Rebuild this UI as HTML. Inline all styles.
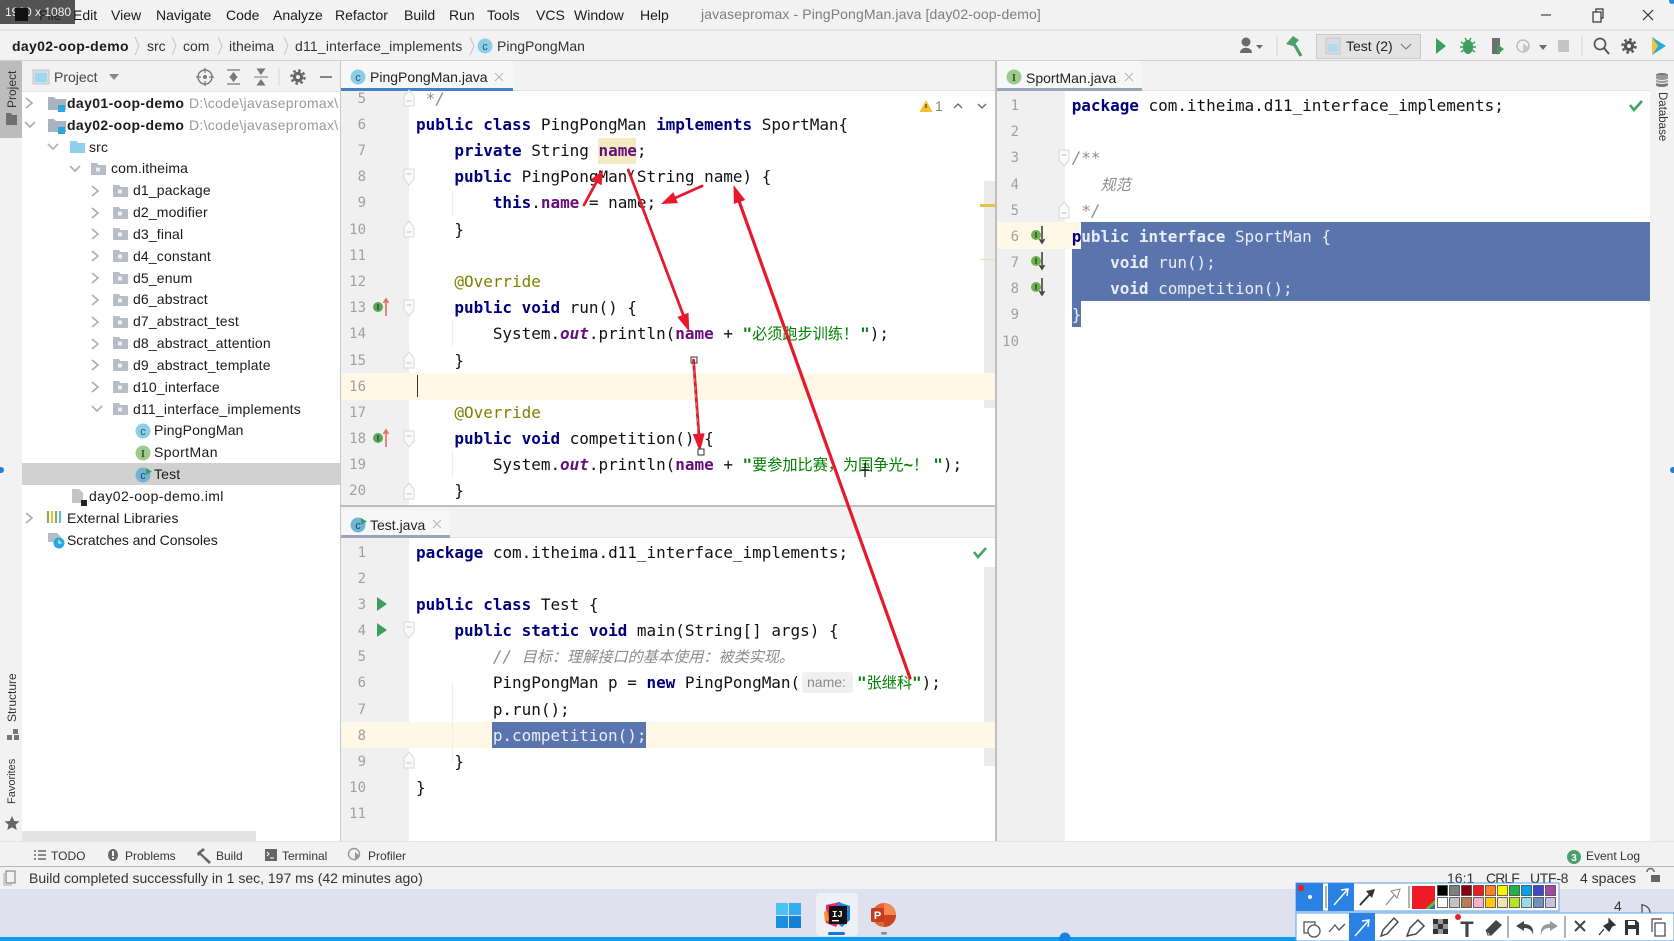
<!DOCTYPE html>
<html><head><meta charset="utf-8"><title>PingPongMan.java</title>
<style>
html,body{margin:0;padding:0;width:1674px;height:941px;overflow:hidden;background:#fff}
#root{position:relative;width:1674px;height:941px;overflow:hidden;font-family:"Liberation Sans","Noto Sans CJK SC",sans-serif;font-size:14px;color:#1a1a1a;filter:blur(.3px)}
.b{position:absolute}
.t{position:absolute;white-space:pre;height:22px;line-height:22px}
.r{position:absolute;white-space:pre;height:22px;line-height:22px;top:calc(var(--i)*21.83px + 91.9px);letter-spacing:.15px}
.pane{position:absolute;left:0;width:1674px;height:0}
.c,.n{position:absolute;top:calc(var(--n)*26.17px);height:26px;line-height:26px;white-space:pre}
.c{font-family:"DejaVu Sans Mono","Noto Sans CJK SC",monospace;font-size:16px;letter-spacing:-.03px;color:#111}
.n{font-family:"DejaVu Sans Mono",monospace;font-size:14px;color:#a0a0a0;text-align:right;width:30px}
.k{color:#000080;font-weight:bold}
.f{color:#660e7a;font-weight:bold}
.s{color:#008000;font-weight:bold}
.a{color:#808000}
.m{color:#8c8c8c;font-style:italic}
.o{color:#660e7a;font-style:italic;font-weight:bold}
.z{font-family:"Noto Sans CJK SC",sans-serif;font-size:15.15px;letter-spacing:0;line-height:0;font-weight:normal}
.w,.w .k{color:#e9edf5}
.w .k{font-weight:bold}
.tb{font-size:12px}
.rot{position:absolute;white-space:pre;font-size:12px;line-height:14px;color:#333;transform-origin:0 0}
</style></head><body><div id="root">

<!-- title + nav backgrounds -->
<div class="b" style="left:0;top:0;width:1674px;height:61px;background:#f2f2f2"></div>
<div class="b" style="left:0;top:29px;width:1674px;height:2px;background:#e4e4e4"></div>
<div class="b" style="left:0;top:60px;width:1674px;height:1px;background:#cfcfcf"></div>

<span class="t" style="left:39px;top:4px">File</span>
<span class="t" style="left:73px;top:4px">Edit</span>
<span class="t" style="left:111px;top:4px">View</span>
<span class="t" style="left:156px;top:4px">Navigate</span>
<span class="t" style="left:226px;top:4px">Code</span>
<span class="t" style="left:273px;top:4px">Analyze</span>
<span class="t" style="left:335px;top:4px">Refactor</span>
<span class="t" style="left:404px;top:4px">Build</span>
<span class="t" style="left:449px;top:4px">Run</span>
<span class="t" style="left:487px;top:4px">Tools</span>
<span class="t" style="left:536px;top:4px">VCS</span>
<span class="t" style="left:574px;top:4px">Window</span>
<span class="t" style="left:640px;top:4px">Help</span>
<span class="t" style="left:701px;top:3px;color:#7d7d7d;letter-spacing:.11px">javasepromax - PingPongMan.java [day02-oop-demo]</span>

<div class="b" style="left:0;top:0;width:75px;height:24px;background:rgba(38,38,38,.78)"></div>
<span class="t" style="left:5px;top:1px;color:#eee;font-size:12px">1920 x 1080</span>

<!-- breadcrumb -->
<span class="t" style="left:12px;top:35px;font-weight:bold;letter-spacing:.35px">day02-oop-demo</span>
<span class="t" style="left:147px;top:35px;color:#333">src</span>
<span class="t" style="left:183px;top:35px;color:#333">com</span>
<span class="t" style="left:229px;top:35px;color:#333">itheima</span>
<span class="t" style="left:295px;top:35px;color:#333;letter-spacing:.18px">d11_interface_implements</span>
<span class="t" style="left:497px;top:35px;color:#333">PingPongMan</span>

<!-- run config -->
<div class="b" style="left:1316px;top:34px;width:103px;height:23px;background:#e3e3e3;border:1px solid #c9c9c9"></div>
<span class="t" style="left:1346px;top:35px;color:#222">Test (2)</span>

<!-- left stripe -->
<div class="b" style="left:0;top:61px;width:22px;height:780px;background:#f2f2f2"></div>
<div class="b" style="left:0;top:61px;width:22px;height:77px;background:#bcbcbc"></div>
<span class="rot" style="left:5px;top:108px;transform:rotate(-90deg);width:50px">Project</span>
<span class="rot" style="left:5px;top:722px;transform:rotate(-90deg);width:60px">Structure</span>
<span class="rot" style="left:5px;top:804px;transform:rotate(-90deg);width:60px;font-size:11px">Favorites</span>

<!-- project panel -->
<div class="b" style="left:22px;top:61px;width:318px;height:30px;background:#f2f2f2"></div>
<div class="b" style="left:22px;top:91px;width:318px;height:1px;background:#e6e6e6"></div>
<span class="t" style="left:54px;top:66px;color:#444">Project</span>
<div class="b" style="left:22px;top:463px;width:318px;height:22px;background:#d1d1d1"></div>
<div class="b" style="left:22px;top:831px;width:234px;height:10px;background:#e3e3e3"></div>

<div class="r" style="--i:0;left:67px;letter-spacing:.38px"><b>day01-oop-demo</b></div>
<div class="r" style="--i:1;left:67px;letter-spacing:.38px"><b>day02-oop-demo</b></div>
<div class="r" style="--i:0;left:189px;color:#9a9a9a;letter-spacing:.3px">D:\code\javasepromax\</div>
<div class="r" style="--i:1;left:189px;color:#9a9a9a;letter-spacing:.3px">D:\code\javasepromax\</div>
<div class="r" style="--i:2;left:89px">src</div>
<div class="r" style="--i:3;left:111px">com.itheima</div>
<div class="r" style="--i:4;left:133px">d1_package</div>
<div class="r" style="--i:5;left:133px">d2_modifier</div>
<div class="r" style="--i:6;left:133px">d3_final</div>
<div class="r" style="--i:7;left:133px">d4_constant</div>
<div class="r" style="--i:8;left:133px">d5_enum</div>
<div class="r" style="--i:9;left:133px">d6_abstract</div>
<div class="r" style="--i:10;left:133px">d7_abstract_test</div>
<div class="r" style="--i:11;left:133px">d8_abstract_attention</div>
<div class="r" style="--i:12;left:133px">d9_abstract_template</div>
<div class="r" style="--i:13;left:133px">d10_interface</div>
<div class="r" style="--i:14;left:133px;letter-spacing:.2px">d11_interface_implements</div>
<div class="r" style="--i:15;left:154px">PingPongMan</div>
<div class="r" style="--i:16;left:154px;letter-spacing:.4px">SportMan</div>
<div class="r" style="--i:17;left:154px">Test</div>
<div class="r" style="--i:18;left:89px;letter-spacing:.4px">day02-oop-demo.iml</div>
<div class="r" style="--i:19;left:67px">External Libraries</div>
<div class="r" style="--i:20;left:67px;letter-spacing:-.05px">Scratches and Consoles</div>
<div class="b" style="left:340px;top:61px;width:1px;height:780px;background:#c9c9c9"></div>

<!-- TOP EDITOR -->
<div class="b" style="left:341px;top:91px;width:654px;height:415px;background:#fff"></div>
<div class="b" style="left:341px;top:91px;width:68px;height:415px;background:#f0f0f0"></div>
<div class="b" style="left:984px;top:181px;width:11px;height:227px;background:#ebebeb"></div>
<div class="b" style="left:341px;top:373px;width:654px;height:26.5px;background:#fff8e6"></div>
<div class="b" style="left:598px;top:138px;width:38px;height:26px;background:#f5ebc3"></div>
<div class="b" style="left:980px;top:204px;width:15px;height:3px;background:#e3c34a"></div>
<div class="b" style="left:980px;top:259px;width:15px;height:1px;background:#f0dfa0"></div>
<div class="b" style="left:452px;top:190px;width:1px;height:26px;background:#efefef"></div>
<div class="b" style="left:452px;top:320px;width:1px;height:26px;background:#efefef"></div>
<div class="b" style="left:452px;top:451px;width:1px;height:26px;background:#efefef"></div>
<div class="b" style="left:417px;top:375px;width:1px;height:22px;background:#333"></div>

<div class="pane" style="top:-45.05px">
<span class="n" style="--n:5;left:336px">5</span><span class="n" style="--n:6;left:336px">6</span><span class="n" style="--n:7;left:336px">7</span><span class="n" style="--n:8;left:336px">8</span><span class="n" style="--n:9;left:336px">9</span><span class="n" style="--n:10;left:336px">10</span><span class="n" style="--n:11;left:336px">11</span><span class="n" style="--n:12;left:336px">12</span><span class="n" style="--n:13;left:336px">13</span><span class="n" style="--n:14;left:336px">14</span><span class="n" style="--n:15;left:336px">15</span><span class="n" style="--n:16;left:336px">16</span><span class="n" style="--n:17;left:336px">17</span><span class="n" style="--n:18;left:336px">18</span><span class="n" style="--n:19;left:336px">19</span><span class="n" style="--n:20;left:336px">20</span>
<div class="c" style="--n:5;left:416px"><span class="m"> */</span></div>
<div class="c" style="--n:6;left:416px"><span class="k">public class</span> PingPongMan <span class="k">implements</span> SportMan{</div>
<div class="c" style="--n:7;left:416px">    <span class="k">private</span> String <span class="f">name</span>;</div>
<div class="c" style="--n:8;left:416px">    <span class="k">public</span> PingPongMan(String name) {</div>
<div class="c" style="--n:9;left:416px">        <span class="k">this</span>.<span class="f">name</span> = name;</div>
<div class="c" style="--n:10;left:416px">    }</div>
<div class="c" style="--n:12;left:416px">    <span class="a">@Override</span></div>
<div class="c" style="--n:13;left:416px">    <span class="k">public void</span> run() {</div>
<div class="c" style="--n:14;left:416px">        System.<span class="o">out</span>.println(<span class="f">name</span> + <span class="s">"<span class="z">必须跑步训练</span><span class="z" style="padding-right:2px">！</span>"</span>);</div>
<div class="c" style="--n:15;left:416px">    }</div>
<div class="c" style="--n:17;left:416px">    <span class="a">@Override</span></div>
<div class="c" style="--n:18;left:416px">    <span class="k">public void</span> competition() {</div>
<div class="c" style="--n:19;left:416px">        System.<span class="o">out</span>.println(<span class="f">name</span> + <span class="s">"<span class="z">要参加比赛，为国争光</span>~<span class="z" style="padding-right:5px">！</span>"</span>);</div>
<div class="c" style="--n:20;left:416px">    }</div>
</div>

<!-- top tab strip -->
<div class="b" style="left:341px;top:61px;width:655px;height:30px;background:#f2f2f2"></div>
<div class="b" style="left:341px;top:61px;width:172px;height:27px;background:#f7f7f7"></div>
<div class="b" style="left:341px;top:88px;width:172px;height:3px;background:#4083c9"></div>
<div class="b" style="left:513px;top:90px;width:483px;height:1px;background:#e4e4e4"></div>
<span class="t" style="left:370px;top:66px;color:#222;font-size:14px">PingPongMan.java</span>

<div class="b" style="left:340px;top:505px;width:656px;height:2px;background:#bfbfbf"></div>

<!-- BOTTOM EDITOR -->
<div class="b" style="left:341px;top:507px;width:655px;height:31px;background:#f2f2f2"></div>
<div class="b" style="left:341px;top:510px;width:109px;height:25px;background:#f7f7f7"></div>
<div class="b" style="left:341px;top:535px;width:109px;height:3px;background:#9aa5bd"></div>
<div class="b" style="left:450px;top:537px;width:546px;height:1px;background:#e4e4e4"></div>
<span class="t" style="left:370px;top:514px;color:#222;font-size:14px">Test.java</span>
<div class="b" style="left:341px;top:538px;width:68px;height:303px;background:#f0f0f0"></div>
<div class="b" style="left:984px;top:567px;width:11px;height:199px;background:#ebebeb"></div>
<div class="b" style="left:341px;top:722px;width:654px;height:26px;background:#fff8e6"></div>
<div class="b" style="left:452px;top:682px;width:1px;height:80px;background:#efefef"></div>
<div class="b" style="left:492px;top:722px;width:154px;height:26px;background:#5a75ad"></div>
<div class="b" style="left:802px;top:672px;width:51px;height:21px;background:#f0f0f0;border-radius:3px"></div>
<span class="t" style="left:807px;top:671px;color:#8a8a8a;font-size:14px">name:</span>

<div class="pane" style="top:513.4px">
<span class="n" style="--n:1;left:336px">1</span><span class="n" style="--n:2;left:336px">2</span><span class="n" style="--n:3;left:336px">3</span><span class="n" style="--n:4;left:336px">4</span><span class="n" style="--n:5;left:336px">5</span><span class="n" style="--n:6;left:336px">6</span><span class="n" style="--n:7;left:336px">7</span><span class="n" style="--n:8;left:336px">8</span><span class="n" style="--n:9;left:336px">9</span><span class="n" style="--n:10;left:336px">10</span><span class="n" style="--n:11;left:336px">11</span>
<div class="c" style="--n:1;left:416px"><span class="k">package</span> com.itheima.d11_interface_implements;</div>
<div class="c" style="--n:3;left:416px"><span class="k">public class</span> Test {</div>
<div class="c" style="--n:4;left:416px">    <span class="k">public static void</span> main(String[] args) {</div>
<div class="c" style="--n:5;left:416px">        <span class="m">// <span class="z">目标：理解接口的基本使用：被类实现。</span></span></div>
<div class="c" style="--n:6;left:416px">        PingPongMan p = <span class="k">new</span> PingPongMan(</div>
<div class="c" style="--n:6;left:857px"><span class="s">"<span class="z">张继科</span>"</span>);</div>
<div class="c" style="--n:7;left:416px">        p.run();</div>
<div class="c w" style="--n:8;left:416px">        p.competition();</div>
<div class="c" style="--n:9;left:416px">    }</div>
<div class="c" style="--n:10;left:416px">}</div>
</div>

<!-- RIGHT EDITOR -->
<div class="b" style="left:995px;top:61px;width:2px;height:780px;background:#bfbfbf"></div>
<div class="b" style="left:997px;top:61px;width:653px;height:30px;background:#f2f2f2"></div>
<div class="b" style="left:997px;top:61px;width:145px;height:27px;background:#f7f7f7"></div>
<div class="b" style="left:997px;top:88px;width:145px;height:3px;background:#9aa5bd"></div>
<div class="b" style="left:1142px;top:90px;width:508px;height:1px;background:#e4e4e4"></div>
<span class="t" style="left:1026px;top:67px;color:#222;font-size:14px">SportMan.java</span>
<div class="b" style="left:997px;top:91px;width:68px;height:750px;background:#f0f0f0"></div>
<div class="b" style="left:997px;top:222px;width:84px;height:26.5px;background:#fff8e6"></div>
<div class="b" style="left:1081px;top:222px;width:569px;height:26.5px;background:#5a75ad"></div>
<div class="b" style="left:1072px;top:248.5px;width:578px;height:52.5px;background:#5a75ad"></div>
<div class="b" style="left:1072px;top:301px;width:9px;height:26px;background:#5a75ad"></div>

<div class="pane" style="top:66.9px">
<span class="n" style="--n:1;left:989px">1</span><span class="n" style="--n:2;left:989px">2</span><span class="n" style="--n:3;left:989px">3</span><span class="n" style="--n:4;left:989px">4</span><span class="n" style="--n:5;left:989px">5</span><span class="n" style="--n:6;left:989px">6</span><span class="n" style="--n:7;left:989px">7</span><span class="n" style="--n:8;left:989px">8</span><span class="n" style="--n:9;left:989px">9</span><span class="n" style="--n:10;left:989px">10</span>
<div class="c" style="--n:1;left:1071.7px"><span class="k">package</span> com.itheima.d11_interface_implements;</div>
<div class="c" style="--n:3;left:1071.7px"><span class="m">/**</span></div>
<div class="c" style="--n:4;left:1071.7px"><span class="m">   <span class="z">规范</span></span></div>
<div class="c" style="--n:5;left:1071.7px"><span class="m"> */</span></div>
<div class="c" style="--n:6;left:1071.7px"><span class="k">p</span><span class="w"><span class="k">ublic interface</span> SportMan {</span></div>
<div class="c w" style="--n:7;left:1071.7px">    <span class="k">void</span> run();</div>
<div class="c w" style="--n:8;left:1071.7px">    <span class="k">void</span> competition();</div>
<div class="c w" style="--n:9;left:1071.7px">}</div>
</div>

<!-- right stripe -->
<div class="b" style="left:1650px;top:61px;width:24px;height:780px;background:#f2f2f2"></div>
<span class="rot" style="left:1669px;top:92px;transform:rotate(90deg);width:60px;font-size:11.5px">Database</span>

<!-- bottom bars -->
<div class="b" style="left:0;top:841px;width:1674px;height:25px;background:#f2f2f2;border-top:1px solid #e4e4e4;box-sizing:border-box"></div>
<div class="b" style="left:0;top:866px;width:1674px;height:1px;background:#b9b9b9"></div>
<div class="b" style="left:0;top:867px;width:1674px;height:22px;background:#f2f2f2"></div>
<span class="t tb" style="left:51px;top:845px;color:#333">TODO</span>
<span class="t tb" style="left:125px;top:845px;color:#333">Problems</span>
<span class="t tb" style="left:216px;top:845px;color:#333">Build</span>
<span class="t tb" style="left:282px;top:845px;color:#333">Terminal</span>
<span class="t tb" style="left:368px;top:845px;color:#333">Profiler</span>
<span class="t tb" style="left:1586px;top:845px;color:#333">Event Log</span>
<span class="t" style="left:29px;top:866.5px;color:#333">Build completed successfully in 1 sec, 197 ms (42 minutes ago)</span>
<span class="t" style="left:1447px;top:866.5px;color:#333">16:1</span>
<span class="t" style="left:1486px;top:866.5px;color:#333;letter-spacing:-.9px">CRLF</span>
<span class="t" style="left:1530px;top:866.5px;color:#333;letter-spacing:-.3px">UTF-8</span>
<span class="t" style="left:1580px;top:866.5px;color:#333">4 spaces</span>

<!-- taskbar -->
<div class="b" style="left:0;top:889px;width:1674px;height:48px;background:#dfe2ee"></div>
<div class="b" style="left:0;top:937px;width:1674px;height:4px;background:#0a9df0"></div>
<div class="b" style="left:816px;top:893px;width:42px;height:43px;background:#eef0f7;border-radius:4px"></div>
<span class="t" style="left:1614px;top:895px;color:#333">4</span>

<!-- SVG icons & annotations -->
<svg class="b" style="left:0;top:0" width="1674" height="941" viewBox="0 0 1674 941" xmlns="http://www.w3.org/2000/svg">
<defs>
<symbol id="fo" viewBox="0 0 15 12" width="15" height="12"><path d="M0 0h6l1.5 2H15v10H0z" fill="#b6bdc6"/><rect x="5" y="4.5" width="4" height="4" fill="#eef0f3"/></symbol>
<symbol id="ro" viewBox="0 0 10 12" width="10" height="12"><path d="M2 1l6 5-6 5" fill="none" stroke="#b0b0b0" stroke-width="1.7"/></symbol>
<symbol id="do" viewBox="0 0 12 10" width="12" height="10"><path d="M1 2l5 5 5-5" fill="none" stroke="#b0b0b0" stroke-width="1.7"/></symbol>
<symbol id="fu" viewBox="0 0 14 20" width="14" height="20"><path d="M2 2h10v10l-5 6-5-6z" fill="#fafafa" stroke="#d8d8d8"/><path d="M4.5 7h5" stroke="#c0c0c0"/></symbol>
<symbol id="fd" viewBox="0 0 14 20" width="14" height="20"><path d="M2 18h10V8L7 2 2 8z" fill="#fafafa" stroke="#d8d8d8"/><path d="M4.5 13h5" stroke="#c0c0c0"/></symbol>
<symbol id="ov" viewBox="0 0 18 22" width="18" height="22"><circle cx="6" cy="11" r="5" fill="#5aa65a"/><rect x="5.2" y="8" width="1.6" height="6" fill="#2d5f2d"/><path d="M14 20V4M11.5 7L14 3l2.5 4" stroke="#e2705c" stroke-width="1.6" fill="none"/></symbol>
<symbol id="im" viewBox="0 0 20 22" width="20" height="22"><circle cx="6" cy="11" r="5" fill="#6fb04f"/><rect x="5.2" y="8" width="1.6" height="6" fill="#2d5f2d"/><path d="M12 2v17M9.5 15l2.5 4 2.5-4" stroke="#444" stroke-width="1.6" fill="none"/></symbol>
</defs>

<!-- JB logo behind overlay -->
<rect x="15" y="8" width="13" height="13" fill="#111"/>

<!-- window controls -->
<path d="M1541 15h10" stroke="#444" stroke-width="1.2"/>
<rect x="1593" y="12" width="8" height="10" fill="none" stroke="#333" stroke-width="1.2"/><path d="M1596 12V9h7v9h-2" fill="none" stroke="#333" stroke-width="1.2"/>
<path d="M1643 10l10 10M1653 10l-10 10" stroke="#333" stroke-width="1.2"/>
<circle cx="1672" cy="1" r="3" fill="#1d8ef0"/>

<!-- breadcrumb chevrons and icon -->
<g fill="none" stroke="#c4c4c4" stroke-width="1"><path d="M135 37l4 9-4 9M172 37l4 9-4 9M218 37l4 9-4 9M284 37l4 9-4 9M470 37l4 9-4 9"/></g>
<circle cx="485" cy="46" r="7.5" fill="#8ccde8"/>
<text x="485" y="50" font-size="11" text-anchor="middle" fill="#2f5266" font-family="Liberation Sans">c</text>

<!-- toolbar right -->
<circle cx="1246" cy="42" r="4.5" fill="#6b6b6b"/><path d="M1240 53c0-7 12-7 12 0z" fill="#6b6b6b"/><path d="M1256 45h7l-3.5 4z" fill="#6b6b6b"/>
<path d="M1277 36v20" stroke="#d4d4d4"/>
<path d="M1286 44l7-8 6 4-6 6z" fill="#4ba06a"/><path d="M1293 42l8 14" stroke="#4ba06a" stroke-width="3.2"/>
<rect x="1326" y="38" width="14" height="16" fill="#d7dde2" stroke="#c3c9cf"/><rect x="1328" y="44" width="10" height="8" fill="#b3d9ec"/>
<path d="M1401 44l5 5 5-5" fill="none" stroke="#777" stroke-width="1.1"/>
<path d="M1436 38l10 8-10 8z" fill="#3d9f5d"/>
<ellipse cx="1468" cy="47" rx="5" ry="7" fill="#3d9f5d"/><path d="M1461 42l3 2M1475 42l-3 2M1460 47h3M1476 47h-3M1461 52l3-2M1475 52l-3-2M1465 38l2 3M1471 38l-2 3" stroke="#3d9f5d" stroke-width="1.5"/>
<path d="M1492 38h8v16h-8z" fill="#6f6f6f"/><path d="M1497 44l7 5-7 6z" fill="#3d9f5d"/>
<circle cx="1523" cy="46" r="6" fill="none" stroke="#bdbdbd" stroke-width="1.5"/><path d="M1523 43l6 5-6 5z" fill="#c9c9c9"/>
<path d="M1539 45h8l-4 5z" fill="#6b6b6b"/>
<rect x="1558" y="40" width="11" height="12" fill="#c5c5c5"/>
<path d="M1582 36v20" stroke="#d4d4d4"/>
<circle cx="1600" cy="44" r="5.5" fill="none" stroke="#555" stroke-width="1.7"/><path d="M1604 48l5 6" stroke="#555" stroke-width="2"/>
<circle cx="1629" cy="46" r="3.6" fill="none" stroke="#555" stroke-width="3.2"/><circle cx="1629" cy="46" r="6.5" fill="none" stroke="#555" stroke-width="2.4" stroke-dasharray="2.55 2.55"/>
<path d="M1652 37l14 9-14 9z" fill="#2aa9dd"/><path d="M1652 37l6 9-6 9z" fill="#f5c63a"/>

<!-- left stripe icons -->
<path d="M5 113h5l1 2h5v10H5z" fill="#6f6f6f" transform="translate(1 0)"/>
<rect x="13" y="729" width="5" height="5" fill="#777"/><rect x="7" y="735" width="5" height="5" fill="#777"/><rect x="14" y="735" width="5" height="5" fill="#777"/>
<path d="M12 816l2.2 5 5.3.4-4 3.4 1.3 5.2-4.8-2.8-4.8 2.8 1.3-5.2-4-3.4 5.3-.4z" fill="#666"/>
<circle cx="1" cy="470" r="3" fill="#1d7fe0"/><circle cx="1673" cy="470" r="3" fill="#1d7fe0"/>

<!-- project header icons -->
<rect x="33" y="70" width="16" height="14" fill="#d7dde2" stroke="#c0c6cc"/><rect x="35" y="73" width="12" height="9" fill="#9fd7ef"/>
<path d="M109 74h10l-5 6z" fill="#888"/>
<circle cx="205" cy="77" r="7" fill="none" stroke="#777" stroke-width="1.4"/><circle cx="205" cy="77" r="2" fill="#777"/><path d="M205 68v5M205 81v5M196 77h5M209 77h5" stroke="#777" stroke-width="1.2"/>
<path d="M227 70h13M227 84h13M233.5 73l-3 4h6zM233.5 81l-3-4h6z" stroke="#777" stroke-width="1.3" fill="#777"/>
<path d="M254 77h14M261 74l-3.5-5h7zM261 80l-3.5 5h7z" stroke="#777" stroke-width="1.1" fill="#777"/>
<path d="M279 68v18" stroke="#d8d8d8"/>
<circle cx="298" cy="77" r="3.6" fill="none" stroke="#666" stroke-width="3.2"/><circle cx="298" cy="77" r="6.5" fill="none" stroke="#666" stroke-width="2.4" stroke-dasharray="2.55 2.55"/>
<path d="M320 77h12" stroke="#777" stroke-width="1.8"/>

<!-- tree chevrons -->
<use href="#ro" x="24" y="97"/><use href="#do" x="24" y="120"/><use href="#do" x="47" y="142"/><use href="#do" x="69" y="164"/>
<use href="#ro" x="90" y="185"/><use href="#ro" x="90" y="207"/><use href="#ro" x="90" y="228"/><use href="#ro" x="90" y="250"/><use href="#ro" x="90" y="272"/><use href="#ro" x="90" y="294"/><use href="#ro" x="90" y="316"/><use href="#ro" x="90" y="338"/><use href="#ro" x="90" y="359"/><use href="#ro" x="90" y="381"/><use href="#do" x="91" y="404"/><use href="#ro" x="24" y="512"/>

<!-- module folders -->
<g><path d="M48 97h6l2 2h10v11H48z" fill="#a9b3be"/><rect x="58" y="105" width="7" height="7" fill="#2aa8dc"/></g>
<g><path d="M48 119h6l2 2h10v11H48z" fill="#a9b3be"/><rect x="58" y="127" width="7" height="7" fill="#2aa8dc"/></g>
<path d="M70 141h6l2 2h7v10H70z" fill="#8fd0ea"/>
<use href="#fo" x="91" y="163"/>
<use href="#fo" x="113" y="185"/><use href="#fo" x="113" y="207"/><use href="#fo" x="113" y="228"/><use href="#fo" x="113" y="250"/><use href="#fo" x="113" y="272"/><use href="#fo" x="113" y="294"/><use href="#fo" x="113" y="316"/><use href="#fo" x="113" y="337"/><use href="#fo" x="113" y="359"/><use href="#fo" x="113" y="381"/><use href="#fo" x="113" y="403"/>

<circle cx="143" cy="431" r="7.5" fill="#8ccde8"/><text x="143" y="435" font-size="11" text-anchor="middle" fill="#2f5266" font-family="Liberation Sans">c</text>
<circle cx="143" cy="453" r="7.5" fill="#9ccb8c"/><text x="143" y="457" font-size="10" font-weight="bold" text-anchor="middle" fill="#2d4f2d" font-family="Liberation Serif">I</text>
<circle cx="143" cy="475" r="7.5" fill="#6fb6d6"/><text x="143" y="479" font-size="11" text-anchor="middle" fill="#23465a" font-family="Liberation Sans">c</text><path d="M146 468l6 3.5-6 3.5z" fill="#3d9f5d"/>
<path d="M72 489h7l4 4v10H72z" fill="#bfc5cb"/><rect x="81" y="500" width="6" height="6" fill="#222"/>
<path d="M48 511v12M56 511v12" stroke-width="2.2" stroke="#7fb15f"/><path d="M52 511v12" stroke="#f0b94a" stroke-width="2.2"/><path d="M60 511v12" stroke="#67b7dc" stroke-width="2.2"/>
<path d="M48 533h9l4 4v5H48z" fill="#b4bcc6"/><circle cx="59" cy="543" r="5.5" fill="#2aa8dc"/><path d="M59 540v3h2.5" stroke="#fff" fill="none"/>

<!-- tab icons -->
<circle cx="358" cy="77" r="7.5" fill="#8ccde8"/><text x="358" y="81" font-size="11" text-anchor="middle" fill="#2f5266" font-family="Liberation Sans">c</text>
<path d="M495 73l8 8M503 73l-8 8" stroke="#b5b5b5" stroke-width="1"/>
<circle cx="358" cy="525" r="7.5" fill="#6fb6d6"/><text x="358" y="529" font-size="11" text-anchor="middle" fill="#23465a" font-family="Liberation Sans">c</text><path d="M361 518l6 3.5-6 3.5z" fill="#3d9f5d"/>
<path d="M433 520l8 8M441 520l-8 8" stroke="#b5b5b5" stroke-width="1"/>
<circle cx="1014" cy="77" r="7.5" fill="#9ccb8c"/><text x="1014" y="81" font-size="10" font-weight="bold" text-anchor="middle" fill="#2d4f2d" font-family="Liberation Serif">I</text>
<path d="M1125 73l8 8M1133 73l-8 8" stroke="#b5b5b5" stroke-width="1"/>

<!-- fold markers top -->
<use href="#fd" x="402" y="88"/><use href="#fu" x="402" y="167"/><use href="#fd" x="402" y="219"/><use href="#fu" x="402" y="298"/><use href="#fd" x="402" y="350"/><use href="#fu" x="402" y="429"/><use href="#fd" x="402" y="481"/>
<use href="#ov" x="372" y="296"/><use href="#ov" x="372" y="427"/>
<!-- inspection -->
<path d="M926 100l6.5 12h-13z" fill="#f2c12e"/><rect x="925.2" y="104" width="1.6" height="4" fill="#7a5c00"/>
<text x="935" y="111" font-size="14" fill="#888" font-family="Liberation Sans">1</text>
<path d="M954 108l4-4 4 4M978 104l4 4 4-4" fill="none" stroke="#666" stroke-width="1.3"/>
<path d="M974 552l4 5 8-9" fill="none" stroke="#43a55f" stroke-width="2.6"/>

<!-- bottom gutter -->
<path d="M377 597l10 7-10 7z" fill="#3d9f5d"/><path d="M377 623l10 7-10 7z" fill="#3d9f5d"/>
<use href="#fu" x="402" y="620"/><use href="#fd" x="402" y="750"/>

<!-- right gutter -->
<use href="#fu" x="1057" y="148"/><use href="#fd" x="1057" y="200"/>
<use href="#im" x="1030" y="224"/><use href="#im" x="1030" y="250"/><use href="#im" x="1030" y="276"/>
<path d="M1630 105l4 5 8-9" fill="none" stroke="#43a55f" stroke-width="2.6"/>
<ellipse cx="1662" cy="75" rx="6" ry="2" fill="#777"/><rect x="1656" y="75" width="12" height="10" fill="#999"/><ellipse cx="1662" cy="85" rx="6" ry="2" fill="#777"/><path d="M1656 79c2 2 10 2 12 0M1656 82c2 2 10 2 12 0" stroke="#eee" fill="none"/>

<!-- tool window bar icons -->
<path d="M34 851h2M34 855h2M34 859h2M38 851h8M38 855h8M38 859h8" stroke="#666" stroke-width="1.4"/>
<ellipse cx="113" cy="855" rx="5" ry="6" fill="#666"/><rect x="112" y="851" width="2" height="5" fill="#f2f2f2"/><rect x="112" y="857" width="2" height="2" fill="#f2f2f2"/>
<path d="M197 853l6-5 2 2-4 3 10 9-2 2-9-9-2 1z" fill="#666"/>
<rect x="265" y="849" width="12" height="12" fill="#666"/><path d="M267 852l2 2-2 2M270 858h4" stroke="#fff" fill="none"/>
<circle cx="354" cy="854" r="5.5" fill="none" stroke="#999" stroke-width="1.4"/><path d="M355 852l5 4-5 5z" fill="#999"/>
<circle cx="1574" cy="857" r="7" fill="#4b9e6d"/><text x="1574" y="861" font-size="10" font-weight="bold" text-anchor="middle" fill="#fff" font-family="Liberation Sans">3</text>
<rect x="6" y="871" width="9" height="12" fill="none" stroke="#777"/><path d="M4 873v12h8" fill="none" stroke="#aaa"/>
<path d="M1650 872a3.5 3.5 0 0 1 7 0" fill="none" stroke="#666" stroke-width="1.5" transform="translate(-3 0)"/><rect x="1651" y="875" width="9" height="7" fill="#666"/>

<!-- taskbar icons -->
<g><rect x="776" y="903" width="12" height="12" fill="#4cc2f4"/><rect x="789" y="903" width="12" height="12" fill="#33adf0"/><rect x="776" y="916" width="12" height="12" fill="#1c8fe0"/><rect x="789" y="916" width="12" height="12" fill="#1580d4"/></g>
<path d="M826 905l14-3 4 12-8 13-10-4z" fill="#ee2a6f"/><path d="M838 902l12 4v14l-8 7-8-6z" fill="#1f7fe0"/><path d="M824 912l3-2 2 10-4 2z" fill="#f7941e"/>
<rect x="829" y="906" width="18" height="18" fill="#111"/>
<text x="832" y="917" font-size="9" font-weight="bold" fill="#fff" font-family="Liberation Mono">IJ</text><rect x="832" y="920" width="7" height="1.4" fill="#fff"/>
<rect x="828" y="932" width="17" height="3" rx="1.5" fill="#1a73d8"/>
<circle cx="884" cy="915" r="12" fill="#e8633a"/><path d="M884 903a12 12 0 0 1 12 12h-12z" fill="#f28a54"/><path d="M884 915h12a12 12 0 0 1-12 12z" fill="#c9431f"/>
<rect x="871" y="908" width="13" height="14" rx="1.5" fill="#c43e1c"/><text x="877.5" y="919" font-size="11" font-weight="bold" text-anchor="middle" fill="#fff" font-family="Liberation Sans">P</text>
<rect x="881" y="932" width="6" height="2.6" rx="1.3" fill="#8a8a8a"/>
<circle cx="1065" cy="938" r="5.5" fill="#1a82de"/>
<path d="M1642 905a8 8 0 0 1 8 8" fill="none" stroke="#333" stroke-width="1.1"/><path d="M1642 904v9" stroke="#333" stroke-width="1.1"/>

<!-- draw palette -->
<rect x="1296" y="883" width="263" height="28" fill="#fff" stroke="#5aa0e8"/>
<rect x="1296" y="883" width="27" height="28" fill="#2a82e4"/><circle cx="1301" cy="888" r="3.2" fill="#ee1c25"/><circle cx="1310" cy="897" r="2" fill="#fff"/>
<path d="M1326 886v22" stroke="#666"/>
<rect x="1328" y="883" width="26" height="28" fill="#2a82e4"/>
<path d="M1334 905l14-16M1341 890l7-1-1 7" stroke="#fff" stroke-width="1.4" fill="none"/>
<path d="M1360 905l11-12" stroke="#333" stroke-width="2"/><path d="M1375 889l-9 2 6 7z" fill="#333"/>
<path d="M1386 905l10-12" stroke="#888" stroke-width="1.2"/><path d="M1400 889l-9 2 6 7z" fill="#fff" stroke="#888"/>
<path d="M1409 886v22" stroke="#666"/>
<rect x="1412" y="886" width="23" height="23" fill="#ed1c24"/><path d="M1435 909h-10l10-9z" fill="#5bc236"/><path d="M1435 909h-6l6-5z" fill="#2b6cd8"/>
<g stroke="#444" stroke-width=".8">
<rect x="1437.5" y="885.5" width="10" height="10" fill="#000"/><rect x="1449.5" y="885.5" width="10" height="10" fill="#7f7f7f"/><rect x="1461.5" y="885.5" width="10" height="10" fill="#880015"/><rect x="1473.5" y="885.5" width="10" height="10" fill="#ed1c24"/><rect x="1485.5" y="885.5" width="10" height="10" fill="#ff7f27"/><rect x="1497.5" y="885.5" width="10" height="10" fill="#fff200"/><rect x="1509.5" y="885.5" width="10" height="10" fill="#22b14c"/><rect x="1521.5" y="885.5" width="10" height="10" fill="#00a2e8"/><rect x="1533.5" y="885.5" width="10" height="10" fill="#3f48cc"/><rect x="1545.5" y="885.5" width="10" height="10" fill="#a349a4"/>
<rect x="1437.5" y="897.5" width="10" height="10" fill="#fff"/><rect x="1449.5" y="897.5" width="10" height="10" fill="#c3c3c3"/><rect x="1461.5" y="897.5" width="10" height="10" fill="#b97a57"/><rect x="1473.5" y="897.5" width="10" height="10" fill="#ffaec9"/><rect x="1485.5" y="897.5" width="10" height="10" fill="#ffc90e"/><rect x="1497.5" y="897.5" width="10" height="10" fill="#efe4b0"/><rect x="1509.5" y="897.5" width="10" height="10" fill="#b5e61d"/><rect x="1521.5" y="897.5" width="10" height="10" fill="#99d9ea"/><rect x="1533.5" y="897.5" width="10" height="10" fill="#7092be"/><rect x="1545.5" y="897.5" width="10" height="10" fill="#c8bfe7"/>
</g>
<rect x="1296" y="913" width="378" height="28" fill="#fff" stroke="#5aa0e8"/>
<rect x="1304" y="922" width="11" height="11" fill="none" stroke="#555" stroke-width="1.3"/><circle cx="1314" cy="931" r="6" fill="#fff" stroke="#555" stroke-width="1.3"/>
<path d="M1329 932l6-7 4 5 6-6" fill="none" stroke="#555" stroke-width="1.3"/>
<rect x="1349" y="913" width="26" height="28" fill="#2a82e4"/><path d="M1355 936l14-16M1362 921l7-1-1 7" stroke="#fff" stroke-width="1.4" fill="none"/>
<path d="M1381 936l2-6 11-12 4 4-11 12z" fill="none" stroke="#444" stroke-width="1.4"/>
<path d="M1407 936l3-8 8-8 6 6-8 8zM1407 936l4-1" fill="none" stroke="#444" stroke-width="1.5"/>
<g fill="#333"><rect x="1433" y="919" width="5" height="5"/><rect x="1443" y="919" width="5" height="5"/><rect x="1438" y="924" width="5" height="5"/><rect x="1433" y="929" width="5" height="5"/><rect x="1443" y="929" width="5" height="5"/></g><rect x="1438" y="919" width="5" height="5" fill="#999"/><rect x="1433" y="924" width="5" height="5" fill="#999"/><rect x="1443" y="924" width="5" height="5" fill="#999"/><rect x="1438" y="929" width="5" height="5" fill="#999"/>
<circle cx="1458" cy="917" r="3" fill="#ee1c25"/>
<text x="1467" y="937" font-size="22" font-weight="bold" text-anchor="middle" fill="#444" font-family="Liberation Sans">T</text>
<path d="M1486 930l10-10 6 5-10 10h-3z" fill="#444"/><path d="M1486 930l5 5h-3z" fill="#fff" stroke="#444"/>
<path d="M1508 916v22M1565 916v22" stroke="#666"/>
<path d="M1524 921l-8 5 8 5v-3c5 0 8 2 9 7 1-8-3-11-9-11z" fill="#444"/>
<path d="M1550 921l8 5-8 5v-3c-5 0-8 2-9 7-1-8 3-11 9-11z" fill="#999"/>
<path d="M1575 921l10 10M1585 921l-10 10" stroke="#444" stroke-width="2"/>
<path d="M1609 919l6 6-3 1-3 5-5-5 5-3zM1604 929l-5 6" fill="#333" stroke="#333" stroke-width="1.2"/>
<path d="M1625 920h11l3 3v12h-14z" fill="#333"/><rect x="1628" y="921" width="7" height="4" fill="#fff"/><rect x="1628" y="929" width="8" height="6" fill="#fff"/>
<rect x="1655" y="923" width="10" height="13" fill="#fff" stroke="#444" stroke-width="1.2"/><path d="M1652 932v-13h10" fill="none" stroke="#444" stroke-width="1.2"/>

<!-- red arrows -->
<g stroke="#e8192c" stroke-width="2.8" fill="#e8192c" stroke-linecap="round">
<path d="M584 205L597 181" fill="none"/><polygon stroke="none" points="603,170 601.6,185.2 591,179.4"/>
<path d="M702 186L675 198" fill="none"/><polygon stroke="none" points="661,204 678,203.1 673.2,192.1"/>
<path d="M628.3 170L684 317" fill="none"/><polygon stroke="none" points="689.3,331.7 688.5,312.8 677.3,317"/>
<path d="M910 678L739 201" fill="none" stroke-width="3.2"/><polygon stroke="none" points="733.5,185 745.3,200 733.9,204"/>
<path d="M693.5 360L699 436" fill="none"/><polygon stroke="none" points="700,451.7 704.7,433.3 692.7,434.1"/>
</g>
<path d="M693.5 362L698 430" stroke="#9a9a9a" stroke-width="1" stroke-dasharray="4 4" fill="none"/>
<rect x="691" y="357" width="6" height="6" fill="none" stroke="#333"/>
<rect x="698" y="449" width="6" height="6" fill="#fff" stroke="#333"/>
<path d="M861 470h8M865 463v14" stroke="#111" stroke-width="1.2"/>
</svg>
</div></body></html>
